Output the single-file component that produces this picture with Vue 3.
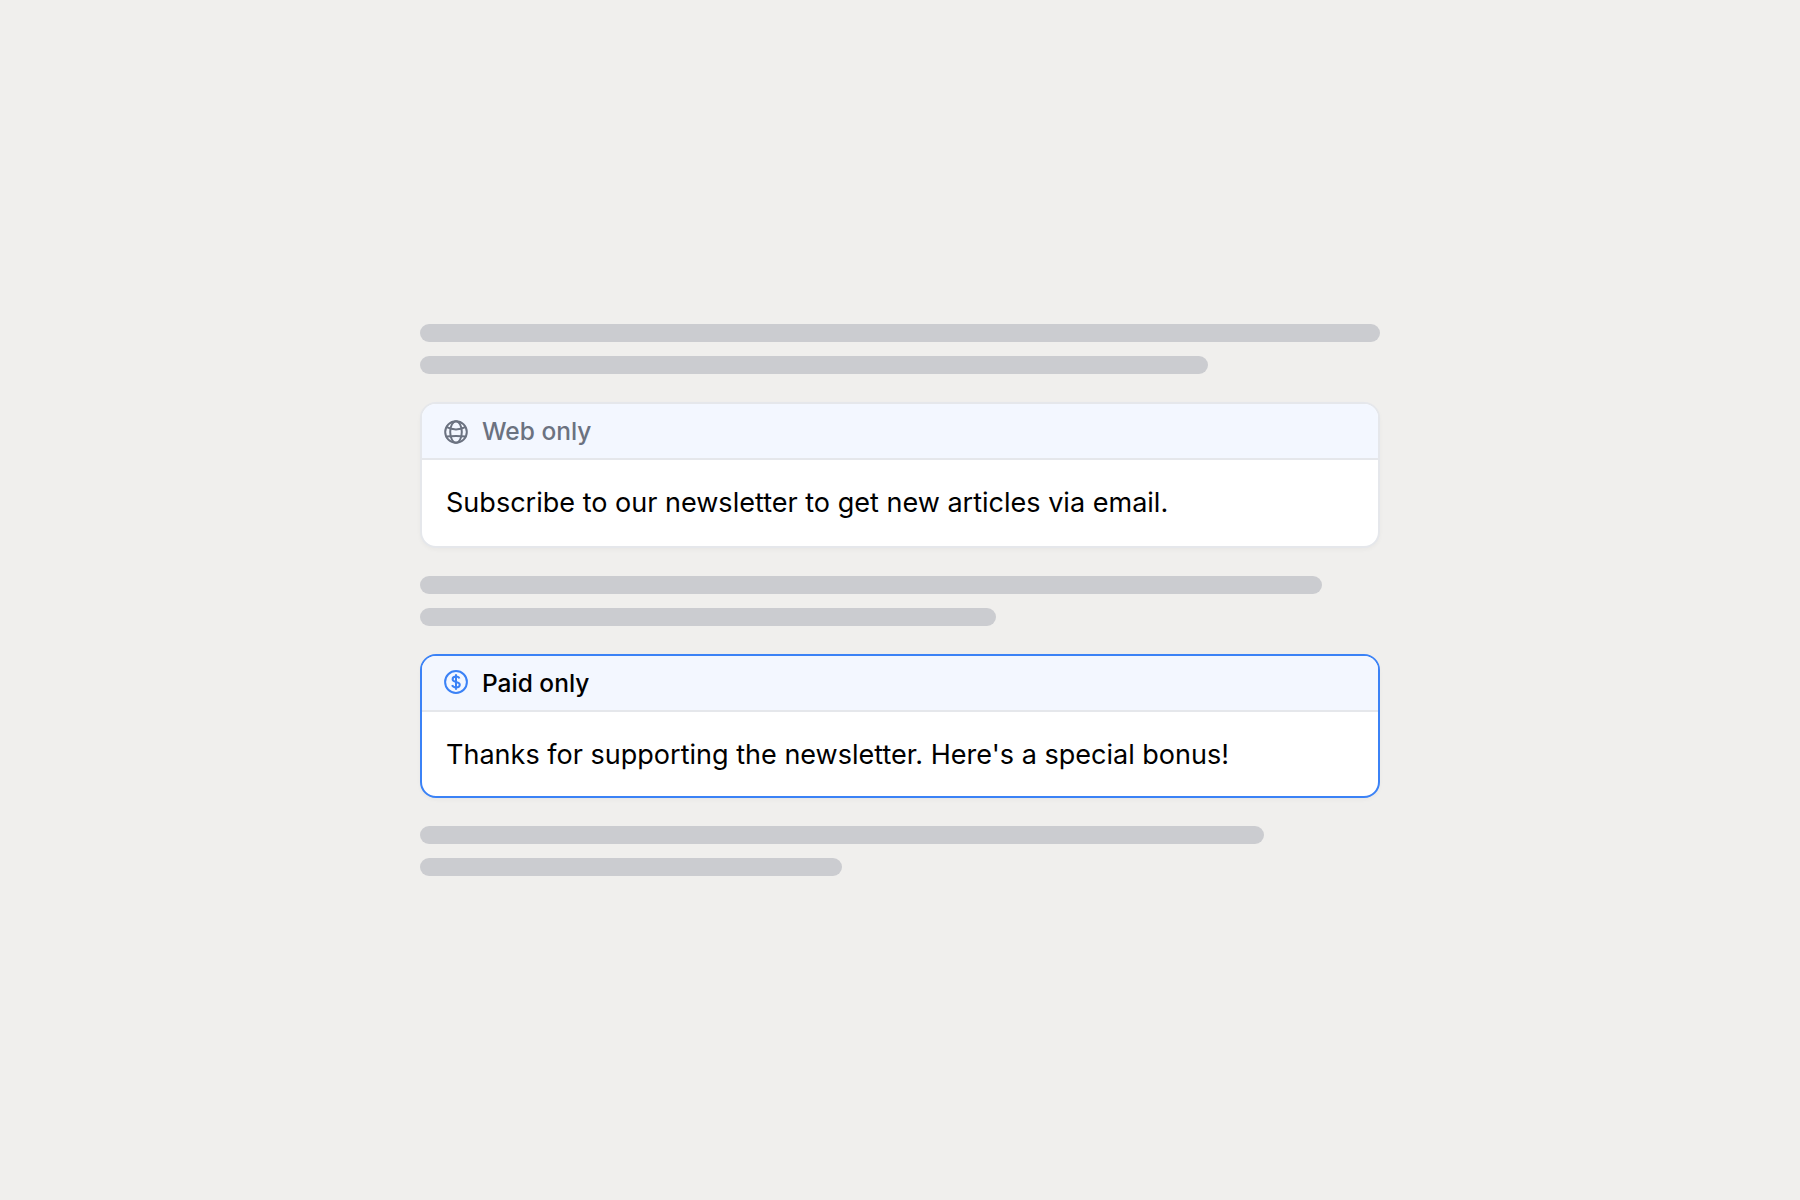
<script setup>
const intro = [960, 788]
const middle = [902, 576]
const outro = [844, 422]
</script>

<template>
  <main class="page">
    <div class="lines">
      <div v-for="w in intro" :key="w" class="line" :style="{ width: w + 'px' }"></div>
    </div>

    <section class="card">
      <header class="card-header">
        <svg class="icon" viewBox="0 0 24 24" fill="none" stroke="currentColor" stroke-width="2">
          <circle cx="12" cy="12" r="10.8" />
          <ellipse cx="12" cy="12" rx="5.8" ry="10.8" />
          <path d="M2.6 7.2Q12 11.6 21.4 7.2M2.2 16.6Q12 15.4 21.8 16.6" />
        </svg>
        <span class="title">Web only</span>
      </header>
      <p class="card-body">Subscribe to our newsletter to get new articles via email.</p>
    </section>

    <div class="lines">
      <div v-for="w in middle" :key="w" class="line" :style="{ width: w + 'px' }"></div>
    </div>

    <section class="card selected">
      <header class="card-header">
        <svg class="icon" viewBox="0 0 24 24" fill="none" stroke="currentColor" stroke-width="2">
          <circle cx="12" cy="12" r="10.9" />
          <path d="M12 4.2v15.6M15.4 8.5C14.9 7.1 13.7 6.6 12 6.6c-2 0-3.4.9-3.4 2.6 0 3.7 7.2 1.7 7.2 5.5 0 1.7-1.6 2.7-3.8 2.7-2 0-3.3-.7-3.9-2.2" />
        </svg>
        <span class="title">Paid only</span>
      </header>
      <p class="card-body">Thanks for supporting the newsletter. Here's a special bonus!</p>
    </section>

    <div class="lines">
      <div v-for="w in outro" :key="w" class="line" :style="{ width: w + 'px' }"></div>
    </div>
  </main>
</template>

<style>
body {
  background: #f0efed;
}
</style>

<style scoped>
.page {
  box-sizing: border-box;
  width: 960px;
  height: 1200px;
  margin: 0 auto;
  display: flex;
  flex-direction: column;
  justify-content: center;
  gap: 28px;
  font-family: Inter, sans-serif;
}
.lines {
  display: flex;
  flex-direction: column;
  gap: 14px;
}
.line {
  height: 18px;
  border-radius: 9px;
  background: #cbccd0;
}
.card {
  box-sizing: border-box;
  height: 146px;
  border: 2px solid #e5e7eb;
  border-radius: 16px;
  overflow: hidden;
  background: #fff;
  box-shadow: 0 2px 4px rgba(0, 0, 0, 0.03);
}
.card-header {
  box-sizing: border-box;
  height: 56px;
  display: flex;
  align-items: center;
  gap: 14px;
  padding-left: 22px;
  border-bottom: 2px solid #e5e7eb;
  background: #f3f7ff;
  color: #6b7280;
}
.icon {
  flex: none;
  width: 24px;
  height: 24px;
  margin-top: 2px;
}
.title {
  font-size: 24.5px;
  font-weight: 500;
  line-height: 32px;
  color: #6b7280;
}
.card-body {
  margin: 0;
  padding: 23px 24px;
  font-size: 27.04px;
  line-height: 40px;
  white-space: nowrap;
  color: #000;
}
.selected {
  height: 144px;
  border-color: #3b82f6;
}
.selected .icon {
  margin-top: -2px;
  color: #3b82f6;
}
.selected .title {
  color: #000;
}
</style>
